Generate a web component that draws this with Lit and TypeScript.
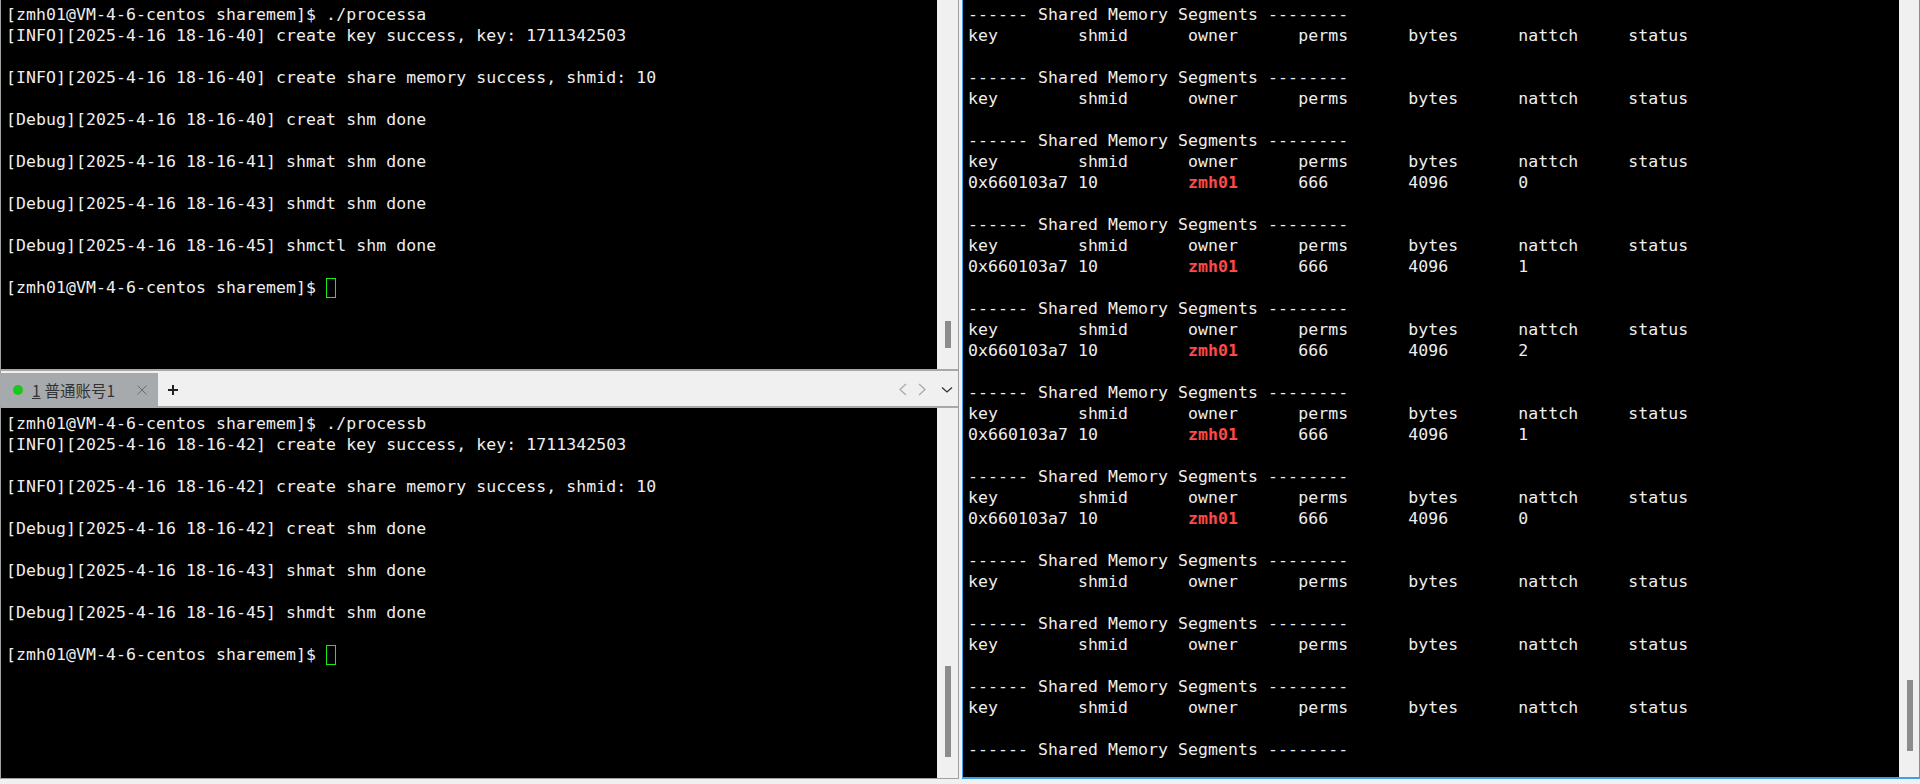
import { LitElement, html, css } from "lit";
import { customElement } from "lit/decorators.js";

const HEAD = "------ Shared Memory Segments --------";
const KEYS = "key        shmid      owner      perms      bytes      nattch     status";

const blocks: (number | null)[] = [null, null, 0, 1, 2, 1, 0, null, null, null];

const topLines = [
  "[zmh01@VM-4-6-centos sharemem]$ ./processa",
  "[INFO][2025-4-16 18-16-40] create key success, key: 1711342503",
  "",
  "[INFO][2025-4-16 18-16-40] create share memory success, shmid: 10",
  "",
  "[Debug][2025-4-16 18-16-40] creat shm done",
  "",
  "[Debug][2025-4-16 18-16-41] shmat shm done",
  "",
  "[Debug][2025-4-16 18-16-43] shmdt shm done",
  "",
  "[Debug][2025-4-16 18-16-45] shmctl shm done",
  "",
];
const bottomLines = [
  "[zmh01@VM-4-6-centos sharemem]$ ./processb",
  "[INFO][2025-4-16 18-16-42] create key success, key: 1711342503",
  "",
  "[INFO][2025-4-16 18-16-42] create share memory success, shmid: 10",
  "",
  "[Debug][2025-4-16 18-16-42] creat shm done",
  "",
  "[Debug][2025-4-16 18-16-43] shmat shm done",
  "",
  "[Debug][2025-4-16 18-16-45] shmdt shm done",
  "",
];
const PROMPT = "[zmh01@VM-4-6-centos sharemem]$ ";

@customElement("app-root")
export class AppRoot extends LitElement {
  static styles = css`
    :host {
      display: block;
      width: 1920px;
      height: 784px;
      background: #f0f0f0;
      overflow: hidden;
    }
    .root {
      display: grid;
      grid-template-columns: 959px 961px;
      height: 778px;
    }
    .left {
      display: flex;
      flex-direction: column;
      height: 779px;
      border-left: 1px solid #a0a0a0;
      border-right: 1px solid #a0a0a0;
      box-sizing: border-box;
    }
    .pane {
      display: flex;
      min-height: 0;
      background: #f0f0f0;
    }
    .pane.top {
      height: 369px;
      border-bottom: 2px solid #a8a8a8;
    }
    .pane.bottom {
      height: 370px;
      border-bottom: 1px solid #a0a0a0;
      border-top: 2px solid #a8a8a8;
    }
    .term {
      flex: 1;
      min-width: 0;
      background: #000;
      color: #eeeeee;
      font-family: "DejaVu Sans Mono", monospace;
      font-size: 16.5px;
      letter-spacing: 0.07px;
      line-height: 21px;
      padding: 4px 0 0 5px;
      overflow: hidden;
      box-sizing: border-box;
    }
    .pane.bottom .term {
      padding-top: 5px;
    }
    .line {
      height: 21px;
      white-space: pre;
    }
    .cursor {
      display: inline-block;
      box-sizing: border-box;
      width: 10px;
      height: 20px;
      border: 1px solid #10f010;
      vertical-align: -5px;
    }
    .bar {
      width: 21px;
      flex: none;
      box-sizing: border-box;
      padding-left: 8px;
    }
    .thumb {
      width: 6px;
      background: #8c8c8c;
    }
    .thumb.t1 {
      height: 27px;
      margin-top: 321px;
    }
    .thumb.t2 {
      height: 91px;
      margin-top: 258px;
    }
    .thumb.t3 {
      height: 71px;
      margin-top: 680px;
    }
    .tabbar {
      display: flex;
      align-items: stretch;
      height: 33px;
      margin-top: 2px;
      font-family: "Noto Sans CJK SC", sans-serif;
      color: #333;
      font-size: 15.5px;
    }
    .tab {
      width: 158px;
      flex: none;
      margin-left: -1px;
      background: #a6aaad;
      display: flex;
      align-items: center;
      box-sizing: border-box;
      padding-left: 13px;
    }
    .dot {
      width: 10px;
      height: 10px;
      border-radius: 50%;
      background: #1cc71c;
      margin-right: 9px;
    }
    .tab u {
      margin-right: 4px;
    }
    .title {
      flex: 1;
      white-space: nowrap;
    }
    .close {
      margin-right: 11px;
      display: block;
    }
    .plus {
      margin-left: 9px;
      align-self: center;
      display: block;
    }
    .spacer {
      flex: 1;
    }
    .nav {
      display: flex;
      align-items: center;
      gap: 11px;
      margin-right: 5px;
    }
    .chev {
      margin-left: 4px;
    }
    .right {
      display: flex;
      box-sizing: border-box;
      margin-left: 3px;
      height: 779px;
      border-left: 1px solid #3ea1e8;
      border-right: 1px solid #3ea1e8;
      border-bottom: 2px solid #3ea1e8;
      background: #f0f0f0;
    }
    .right .bar {
      width: 20px;
    }
    .red {
      color: #ff4848;
      font-weight: 700;
    }
  `;

  private cursorLine() {
    return html`<div class="line">${PROMPT}<span class="cursor"></span></div>`;
  }

  private plain(lines: string[]) {
    return lines.map((l) => html`<div class="line">${l}</div>`);
  }

  private segments() {
    const out = blocks.map(
      (b) => html`
        <div class="line">${HEAD}</div>
        <div class="line">${KEYS}</div>
        ${b === null
          ? ""
          : html`<div class="line">0x660103a7 10         <span class="red">zmh01</span>      666        4096       ${b}</div>`}
        <div class="line"></div>
      `
    );
    return html`${out}<div class="line">${HEAD}</div>`;
  }

  render() {
    return html`
      <div class="root">
        <div class="left">
          <div class="pane top">
            <div class="term">${this.plain(topLines)}${this.cursorLine()}</div>
            <div class="bar"><div class="thumb t1"></div></div>
          </div>
          <div class="tabbar">
            <div class="tab">
              <span class="dot"></span>
              <span class="title"><u>1</u>普通账号1</span>
              <svg class="close" width="10" height="10" viewBox="0 0 10 10">
                <path d="M.5.5l9 9M9.5.5l-9 9" stroke="#6a6d70" stroke-width="1" fill="none" />
              </svg>
            </div>
            <svg class="plus" width="12" height="12" viewBox="0 0 12 12">
              <path d="M6 1v10M1 6h10" stroke="#222" stroke-width="2" fill="none" />
            </svg>
            <div class="spacer"></div>
            <div class="nav">
              <svg width="8" height="13" viewBox="0 0 8 13">
                <path d="M7 1L1 6.5 7 12" stroke="#aaa" stroke-width="1.3" fill="none" />
              </svg>
              <svg width="8" height="13" viewBox="0 0 8 13">
                <path d="M1 1l6 5.5L1 12" stroke="#aaa" stroke-width="1.3" fill="none" />
              </svg>
              <svg class="chev" width="12" height="8" viewBox="0 0 12 8">
                <path d="M1 1.5l5 4.5 5-4.5" stroke="#333" stroke-width="1.3" fill="none" />
              </svg>
            </div>
          </div>
          <div class="pane bottom">
            <div class="term">${this.plain(bottomLines)}${this.cursorLine()}</div>
            <div class="bar"><div class="thumb t2"></div></div>
          </div>
        </div>
        <div class="right">
          <div class="term">${this.segments()}</div>
          <div class="bar"><div class="thumb t3"></div></div>
        </div>
      </div>
    `;
  }
}
